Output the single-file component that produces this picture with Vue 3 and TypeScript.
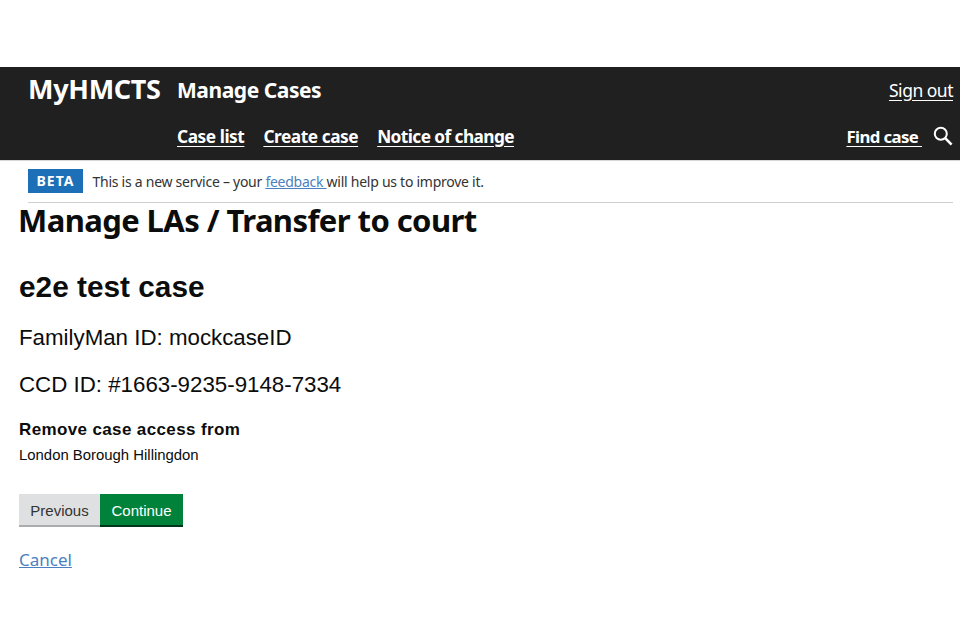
<script setup lang="ts">
const navLinks: string[] = ['Case list', 'Create case', 'Notice of change']
</script>

<template>
  <div class="page">
    <header class="header">
      <div class="row top">
        <span class="brand">MyHMCTS</span>
        <span class="service">Manage Cases</span>
        <a class="signout" href="#">Sign out</a>
      </div>
      <div class="row bottom">
        <nav class="nav">
          <a v-for="l in navLinks" :key="l" href="#">{{ l }}</a>
        </nav>
        <div class="find">
          <a href="#">Find case&nbsp;</a>
          <svg width="20" height="20" viewBox="0 0 20 20" fill="none" stroke="#fff">
            <circle cx="7.8" cy="7.8" r="6" stroke-width="2" />
            <path d="M12.2 12.2 18.6 18.6" stroke-width="2.6" />
          </svg>
        </div>
      </div>
    </header>
    <div class="phase">
      <div class="phase-in">
        <strong class="tag">BETA</strong>
        <span class="phase-text">This is a new service – your <a href="#">feedback </a>will help us to improve it.</span>
      </div>
    </div>
    <main class="main">
      <h1>Manage LAs / Transfer to court</h1>
      <h2>e2e test case</h2>
      <p class="meta first">FamilyMan ID: mockcaseID</p>
      <p class="meta">CCD ID: #1663-9235-9148-7334</p>
      <h3>Remove case access from</h3>
      <p class="la">London Borough Hillingdon</p>
      <div class="buttons">
        <button class="btn prev" type="button">Previous</button>
        <button class="btn cont" type="button">Continue</button>
      </div>
      <a class="cancel" href="#">Cancel</a>
    </main>
  </div>
</template>

<style>
html, body { background: #fff; margin: 0; }
</style>

<style scoped>
.page { width: 960px; height: 640px; padding-top: 67px; box-sizing: border-box; overflow: hidden; font-family: "Liberation Sans", Arial, sans-serif; color: #0b0c0c; }
.header { height: 94px; background: #202020; color: #fff; box-sizing: border-box; border-bottom: 1px solid #d8d8d8; font-family: "Noto Sans", sans-serif; font-weight: 700; }
.header a { color: #fff; text-decoration: underline; text-underline-offset: 3px; }
.row { display: flex; align-items: center; }
.top { height: 46px; padding: 0 7px 0 28px; }
.brand { font-size: 27px; width: 149px; letter-spacing: -.3px; line-height: 44px; margin-top: -2px; }
.service { font-size: 21px; letter-spacing: -.45px; }
.signout { margin-left: auto; font-size: 17.5px; font-weight: 400; letter-spacing: -.5px; }
.bottom { height: 46px; padding: 0 7px 0 177px; }
.nav { display: flex; gap: 19px; font-size: 17.3px; letter-spacing: -.45px; }
.nav a:last-child { letter-spacing: -.58px; }
.find { margin-left: auto; display: flex; align-items: center; gap: 11px; font-size: 16.8px; letter-spacing: -.6px; }
.phase { padding: 0 7px 0 28px; }
.phase-in { height: 42px; box-sizing: border-box; border-bottom: 1px solid #cfcfcf; display: flex; align-items: center; padding-bottom: 1px; }
.tag { background: #1d70b8; color: #fff; font-family: "Noto Sans", sans-serif; font-size: 14px; letter-spacing: 1px; padding: 2px 7px; width: 55px; box-sizing: border-box; height: 24px; line-height: 20px; text-align: center; margin-right: 9.5px; }
.phase-text { font-family: "Noto Sans", sans-serif; font-size: 14px; color: #333; letter-spacing: -.26px; }
.phase-text a { color: #4c7fc0; }
.main { padding-left: 19px; }
h1 { margin: -2px 0 0 -1px; font-family: "Noto Sans", sans-serif; font-size: 31px; line-height: 38px; letter-spacing: -.58px; }
h2 { margin: 30px 0 0; font-size: 29.8px; line-height: 36px; }
.meta { margin: 0; font-size: 22.3px; line-height: 28px; }
.meta.first { margin-top: 19px; }
.meta + .meta { margin-top: 19px; }
h3 { margin: 20px 0 0; font-size: 17px; line-height: 22px; letter-spacing: .37px; }
.la { margin: 4px 0 0; font-size: 14.9px; line-height: 20px; }
.buttons { display: flex; margin-top: 29px; }
.btn { border: 0; font-family: "Liberation Sans", sans-serif; font-size: 15px; height: 33px; padding: 0; }
.prev { width: 81px; background: #dee0e2; color: #333; box-shadow: inset 0 -2px 0 #a9adb0; }
.cont { width: 83px; background: #00823b; color: #fff; box-shadow: inset 0 -2px 0 #003618; }
.cancel { display: inline-block; margin-top: 22px; font-family: "Noto Sans", sans-serif; font-size: 17px; line-height: 22px; color: #4c7fc0; text-decoration: underline; }
</style>
